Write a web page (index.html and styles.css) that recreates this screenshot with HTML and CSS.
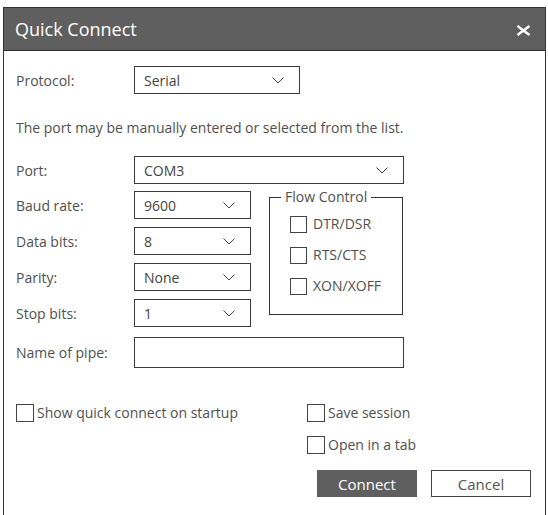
FILE: index.html
```html
<!DOCTYPE html>
<html lang="en">
<head>
<meta charset="UTF-8">
<meta name="viewport" content="width=device-width, initial-scale=1.0">
<title>Quick Connect</title>
<link rel="stylesheet" href="styles.css">
</head>
<body>

  <div class="dialog">
    <div class="titlebar">
      <span class="title">Quick Connect</span>
      <button class="close" aria-label="Close">
        <svg width="15" height="11" viewBox="0 0 15 11"><path d="M1.5 1 L13.5 10 M13.5 1 L1.5 10" stroke="#fff" stroke-width="2.4" fill="none"/></svg>
      </button>
    </div>

    <div class="content">
      <!-- Protocolo -->
      <div class="row">
        <label class="lbl">Protocol:</label>
        <div class="select w-proto"><span>Serial</span><svg class="chev" width="12" height="7" viewBox="0 0 12 7"><path d="M0.5 0.5 L6 6 L11.5 0.5" stroke="#444" fill="none"/></svg></div>
      </div>

      <p class="note">The port may be manually entered or selected from the list.</p>

      <div class="row">
        <label class="lbl">Port:</label>
        <div class="select w-wide"><span>COM3</span><svg class="chev" width="12" height="7" viewBox="0 0 12 7"><path d="M0.5 0.5 L6 6 L11.5 0.5" stroke="#444" fill="none"/></svg></div>
      </div>

      <div class="serial">
        <div class="serial-fields">
          <div class="row">
            <label class="lbl">Baud rate:</label>
            <div class="select w-small"><span>9600</span><svg class="chev" width="12" height="7" viewBox="0 0 12 7"><path d="M0.5 0.5 L6 6 L11.5 0.5" stroke="#444" fill="none"/></svg></div>
          </div>
          <div class="row">
            <label class="lbl">Data bits:</label>
            <div class="select w-small"><span>8</span><svg class="chev" width="12" height="7" viewBox="0 0 12 7"><path d="M0.5 0.5 L6 6 L11.5 0.5" stroke="#444" fill="none"/></svg></div>
          </div>
          <div class="row">
            <label class="lbl">Parity:</label>
            <div class="select w-small"><span>None</span><svg class="chev" width="12" height="7" viewBox="0 0 12 7"><path d="M0.5 0.5 L6 6 L11.5 0.5" stroke="#444" fill="none"/></svg></div>
          </div>
          <div class="row">
            <label class="lbl">Stop bits:</label>
            <div class="select w-small"><span>1</span><svg class="chev" width="12" height="7" viewBox="0 0 12 7"><path d="M0.5 0.5 L6 6 L11.5 0.5" stroke="#444" fill="none"/></svg></div>
          </div>
        </div>

        <fieldset class="flow">
          <legend>Flow Control</legend>
          <label class="check"><span class="box"></span>DTR/DSR</label>
          <label class="check"><span class="box"></span>RTS/CTS</label>
          <label class="check"><span class="box"></span>XON/XOFF</label>
        </fieldset>
      </div>

      <div class="row pipe">
        <label class="lbl">Name of pipe:</label>
        <div class="input w-wide"></div>
      </div>

      <div class="options">
        <div class="opt-left">
          <label class="check big"><span class="box"></span>Show quick connect on startup</label>
        </div>
        <div class="opt-right">
          <label class="check big"><span class="box"></span>Save session</label>
          <label class="check big"><span class="box"></span>Open in a tab</label>
        </div>
      </div>

      <div class="actions">
        <button class="btn primary">Connect</button>
        <button class="btn">Cancel</button>
      </div>
    </div>
  </div>

</body>
</html>
```

FILE: styles.css
```css
  body {
      margin: 0;
      background-color: #fff;
      font-family: "Open Sans", "Liberation Sans", sans-serif;
      font-size: 14px;
      color: #505050;
      overflow: hidden;
  }

  /* Ventana del dialogo */
  .dialog {
      margin: 7px 0 0 3px;
      width: 543px;
      height: 540px;
      box-sizing: border-box;
      border: 1px solid #333;
      background-color: #fff;
  }

  .titlebar {
      display: flex;
      align-items: center;
      justify-content: space-between;
      height: 43px;
      box-sizing: border-box;
      padding: 0 14px 0 11px;
      background-color: #5f5f5f;
      border-bottom: 1px solid #2e2e2e;
  }

  .title {
      color: #fff;
      font-size: 18px;
  }

  .close {
      display: flex;
      padding: 0;
      margin-top: 2px;
      border: none;
      background: none;
  }

  .content {
      padding: 15px 14px 0 12px;
  }

  /* Filas con etiqueta y campo */
  .row {
      display: flex;
      align-items: center;
  }

  .lbl {
      width: 118px;
      flex: none;
  }

  .select,
  .input {
      display: flex;
      align-items: center;
      justify-content: space-between;
      height: 28px;
      box-sizing: border-box;
      padding: 0 15px 0 9px;
      border: 1px solid #3a3a3a;
      color: #444;
  }

  .chev {
      margin-top: 1px;
  }

  .w-proto { width: 166px; }
  .w-wide { width: 270px; }
  .w-small { width: 117px; }

  .note {
      margin: 24px 0 18px;
      line-height: 20px;
  }

  .serial {
      display: flex;
      align-items: flex-start;
      margin-top: 7px;
  }

  .serial-fields {
      display: flex;
      flex-direction: column;
      gap: 8px;
  }

  /* Recuadro de control de flujo */
  .flow {
      margin: -2px 0 0 18px;
      width: 134px;
      box-sizing: border-box;
      padding: 10px 0 19px 20px;
      border: 1px solid #333;
      display: flex;
      flex-direction: column;
      gap: 13px;
  }

  .flow legend {
      padding: 0 4px;
      margin-left: -9px;
      line-height: 16px;
  }

  .check {
      display: flex;
      align-items: center;
      gap: 6px;
      line-height: 18px;
  }

  .box {
      width: 17px;
      height: 17px;
      box-sizing: border-box;
      border: 1px solid #444;
      flex: none;
  }

  .check.big .box {
      width: 18px;
      height: 18px;
  }

  .check.big {
      gap: 3px;
  }

  .pipe {
      margin-top: 10px;
  }

  .pipe .input {
      height: 31px;
  }

  .options {
      display: flex;
      margin-top: 36px;
  }

  .opt-left {
      width: 291px;
  }

  .opt-right {
      display: flex;
      flex-direction: column;
      gap: 14px;
  }

  /* Botones de accion */
  .actions {
      display: flex;
      justify-content: flex-end;
      gap: 14px;
      margin-top: 16px;
  }

  .btn {
      width: 100px;
      height: 27px;
      box-sizing: border-box;
      border: 1px solid #444;
      background-color: #fff;
      color: #555;
      font-family: inherit;
      font-size: 15px;
      padding: 0;
  }

  .btn.primary {
      background-color: #5f5f5f;
      border-color: #5f5f5f;
      color: #fff;
  }
```
